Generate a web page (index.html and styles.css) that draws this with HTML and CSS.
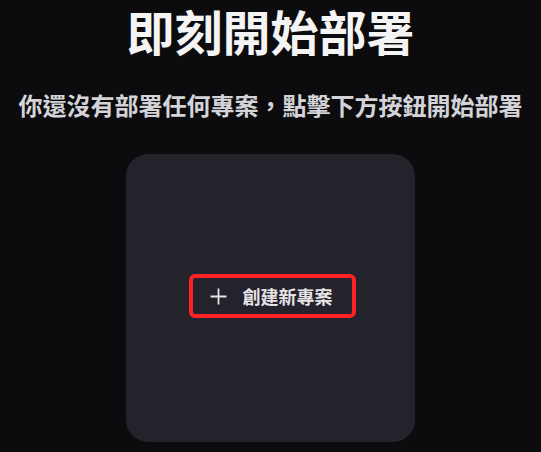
FILE: index.html
```html
<!DOCTYPE html>
<html lang="zh-Hant">
<head>
<meta charset="utf-8">
<title>即刻開始部署</title>
<link rel="stylesheet" href="styles.css">
</head>
<body>
<main class="page">
  <h1 class="title">即刻開始部署</h1>
  <p class="subtitle">你還沒有部署任何專案，點擊下方按鈕開始部署</p>
  <section class="card">
    <button class="create-btn" type="button">
      <svg class="plus" width="17" height="17" viewBox="0 0 17 17" aria-hidden="true">
        <path d="M8.5 0.5V16.5M0.5 8.5H16.5" stroke="currentColor" stroke-width="1.8" fill="none"/>
      </svg>
      <span class="btn-label">創建新專案</span>
    </button>
  </section>
</main>
</body>
</html>
```
FILE: styles.css
```css
html, body {
  margin: 0;
  padding: 0;
  background: #0c0c0e;
}
body {
  font-family: "Noto Sans CJK TC", "Noto Sans", sans-serif;
  color: #f4f4f5;
}
.page {
  display: flex;
  flex-direction: column;
  align-items: center;
  padding-top: 1px;
}
.title {
  margin: 0;
  font-size: 48px;
  line-height: 58px;
  font-weight: 700;
  color: #f4f4f5;
}
.subtitle {
  margin: 32px 0 0;
  font-size: 24px;
  line-height: 28px;
  font-weight: 700;
  color: #d4d4d8;
}
.card {
  margin-top: 35px;
  width: 289px;
  height: 288px;
  border-radius: 22px;
  background: #24222a;
  display: flex;
  align-items: center;
  justify-content: center;
  box-sizing: border-box;
}
.create-btn {
  display: flex;
  align-items: center;
  gap: 16px;
  height: 44px;
  width: 167px;
  box-sizing: border-box;
  padding: 0 0 0 17px;
  border: 4px solid #ff2123;
  border-radius: 6px;
  background: transparent;
  color: #e4e4e7;
  font-family: inherit;
  font-size: 18px;
  font-weight: 700;
  margin-left: 3px;
  margin-top: -4px;
}
.plus {
  display: block;
  flex: none;
}
.btn-label {
  line-height: 18px;
}
```
